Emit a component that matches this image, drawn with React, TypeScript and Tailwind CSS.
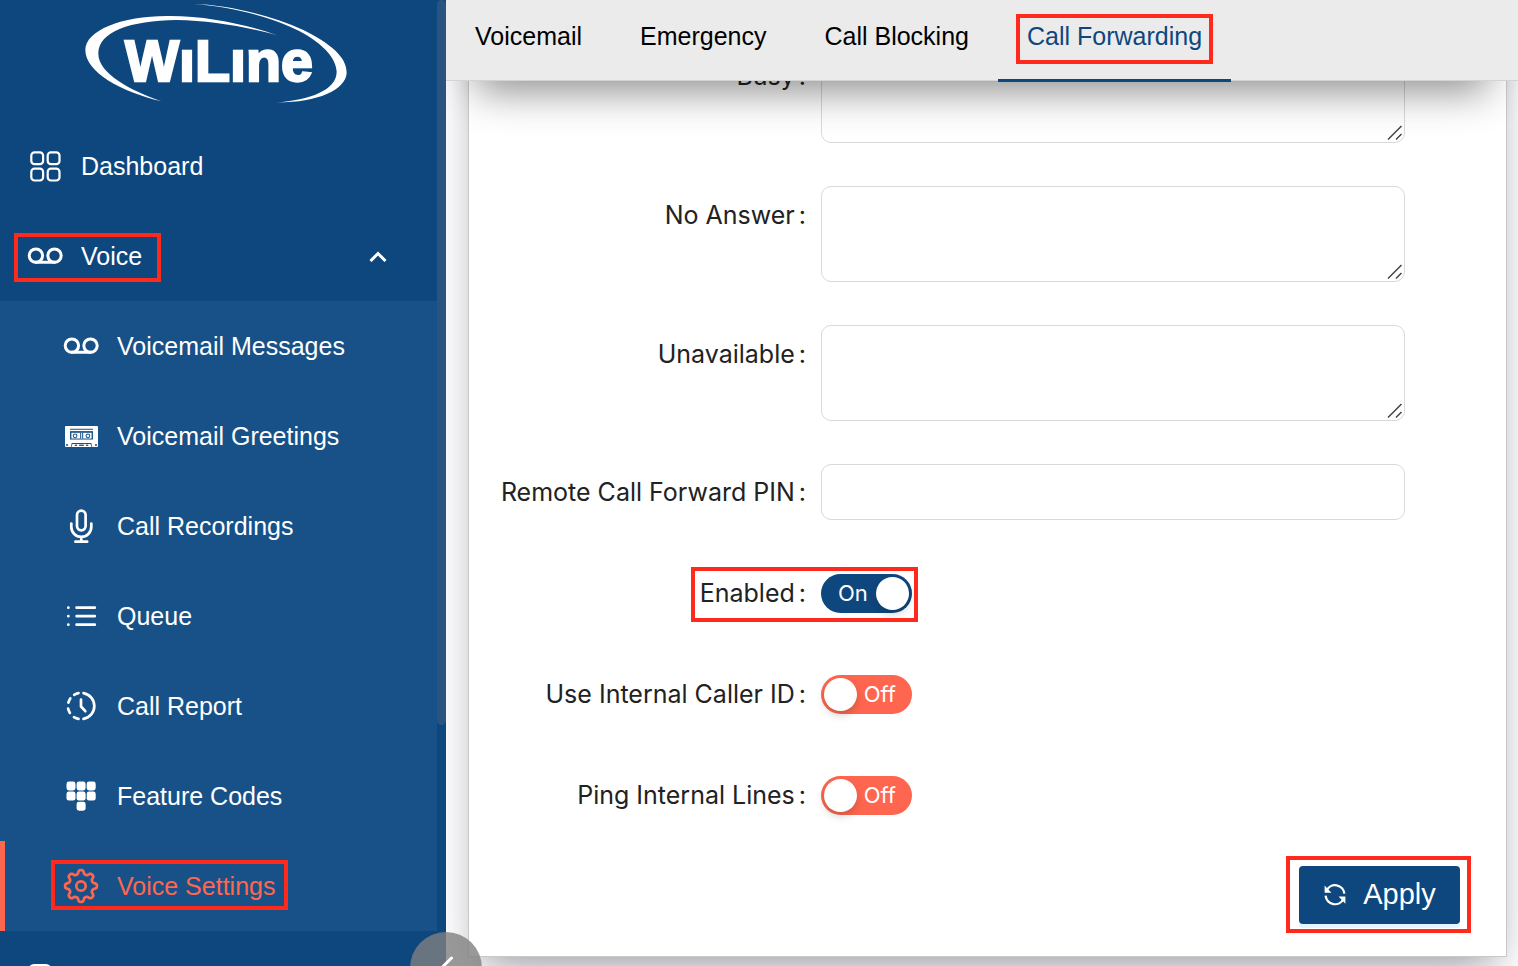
import { useState } from 'react';
import type { ReactNode } from 'react';
import clsx from 'clsx';

const Highlight = ({ className }: { className: string }) => (
  <span
    className={clsx(
      'pointer-events-none absolute border-4 border-[#ff2a1c]',
      className,
    )}
  />
);

const Logo = () => (
  <svg viewBox="0 0 900 330" className="h-[110px] w-[300px]" fill="#fff">
    <path d="M625 106C540 76 420 48 303 48C163 46 49 90 49 150C49 215 153 275 278 304C183 270 87 220 88 160C89 95 183 62 323 60C423 62 533 80 625 106Z" />
    <path d="M373 12C473 14 603 45 703 90C783 130 833 170 833 218C831 270 743 308 621 307C723 300 803 270 803 215C801 165 743 115 663 80C583 45 473 18 373 12Z" />
    <text
      x="168"
      y="242"
      fontSize="172"
      fontWeight="700"
      stroke="#fff"
      strokeWidth="7"
      fontFamily="'Liberation Sans', Arial, sans-serif"
    >
      WıLıne
    </text>
  </svg>
);

const Icon = ({ width = 2.7, children }: { width?: number; children: ReactNode }) => (
  <svg
    viewBox="0 0 36 36"
    className="size-9 shrink-0"
    fill="none"
    stroke="currentColor"
    strokeWidth={width}
    strokeLinecap="round"
    strokeLinejoin="round"
  >
    {children}
  </svg>
);

const GridIcon = () => (
  <Icon width={2.2}>
    <rect x="4.3" y="4.3" width="11.8" height="11.8" rx="3.2" />
    <rect x="20.7" y="4.3" width="11.8" height="11.8" rx="3.2" />
    <rect x="4.3" y="20.7" width="11.8" height="11.8" rx="3.2" />
    <rect x="20.7" y="20.7" width="11.8" height="11.8" rx="3.2" />
  </Icon>
);

const VoicemailIcon = () => (
  <Icon width={3}>
    <circle cx="8.9" cy="17.6" r="6.7" />
    <circle cx="27.5" cy="17.6" r="6.7" />
    <path d="M8.9 24.3H27.5" />
  </Icon>
);

const CassetteIcon = () => (
  <svg viewBox="0 0 98 62" className="h-[21px] w-[33px]">
    <rect width="98" height="62" rx="3" fill="currentColor" />
    <g fill="#185187">
      <rect x="15" y="8" width="68" height="3" />
      <rect x="15" y="15" width="68" height="25" />
      <path d="M20 50H78L81 62H17Z" />
      <circle cx="6" cy="56" r="3" />
      <circle cx="92" cy="56" r="3" />
    </g>
    <g fill="currentColor">
      <rect x="19" y="20" width="60" height="17" />
      <path d="M22 53H76L79 62H19Z" />
    </g>
    <g fill="#185187">
      <circle cx="30" cy="29" r="7" />
      <circle cx="68" cy="29" r="7" />
      <rect x="45" y="20" width="3" height="17" />
      <rect x="51" y="20" width="3" height="17" />
      <rect x="29" y="55" width="7" height="4" />
      <rect x="42" y="55" width="14" height="4" />
      <rect x="62" y="55" width="7" height="4" />
    </g>
    <g fill="currentColor">
      <circle cx="30" cy="29" r="4" />
      <circle cx="68" cy="29" r="4" />
    </g>
  </svg>
);

const MicIcon = () => (
  <Icon>
    <rect x="14" y="2.6" width="8.6" height="19.8" rx="4.3" />
    <path d="M8.3 15.5V18.9A10 10 0 0 0 28.3 18.9V15.5M18.3 29V33.7M12.4 33.7H24.2" />
  </Icon>
);

const ListIcon = () => (
  <Icon>
    <path d="M13.6 9.7H31.8M13.6 18.2H31.8M13.6 26.7H31.8" />
    <path d="M5.3 9.7H5.4M5.3 18.2H5.4M5.3 26.7H5.4" />
  </Icon>
);

const ReportIcon = () => (
  <Icon>
    <path d="M20.5 5.1A13.1 13.1 0 0 1 20.5 30.9" />
    <path d="M15.5 5.1A13.1 13.1 0 0 0 11.2 6.8" />
    <path d="M7.3 10.4A13.1 13.1 0 0 0 5.4 14.6" />
    <path d="M5.1 20.5A13.1 13.1 0 0 0 6.9 24.9" />
    <path d="M11 29.1A13.1 13.1 0 0 0 15.5 30.9" />
    <path d="M18 11.5V18.5L22.3 23.2" />
  </Icon>
);

const KEYS = [
  [3.5, 3.5],
  [13.6, 3.5],
  [23.7, 3.5],
  [3.5, 13.6],
  [13.6, 13.6],
  [23.7, 13.6],
  [13.6, 23.7],
];

const KeypadIcon = () => (
  <svg viewBox="0 0 36 36" className="size-9" fill="currentColor">
    {KEYS.map(([x, y]) => (
      <rect key={`${x}-${y}`} x={x} y={y} width="9" height="9" rx="2.4" />
    ))}
  </svg>
);

// eight rounded teeth, one on each axis and diagonal
const gearPoints = Array.from({ length: 240 }, (_, i) => {
  const t = (i / 240) * Math.PI * 2;
  const r = 14 + 1.9 * (Math.tanh(1.8 * Math.cos(8 * t)) / Math.tanh(1.8));
  return `${(18 + r * Math.cos(t)).toFixed(2)},${(18 + r * Math.sin(t)).toFixed(2)}`;
}).join(' ');

const GearIcon = () => (
  <Icon>
    <polygon points={gearPoints} />
    <circle cx="18" cy="18" r="4.7" />
  </Icon>
);

const subItems: { name: string; icon: ReactNode }[] = [
  { name: 'Voicemail Messages', icon: <VoicemailIcon /> },
  { name: 'Voicemail Greetings', icon: <CassetteIcon /> },
  { name: 'Call Recordings', icon: <MicIcon /> },
  { name: 'Queue', icon: <ListIcon /> },
  { name: 'Call Report', icon: <ReportIcon /> },
  { name: 'Feature Codes', icon: <KeypadIcon /> },
  { name: 'Voice Settings', icon: <GearIcon /> },
];

const tabs = ['Voicemail', 'Emergency', 'Call Blocking', 'Call Forwarding'];

const Sidebar = () => (
  <aside className="relative z-20 flex w-[446px] shrink-0 overflow-hidden bg-[#0e467e] text-[25px] leading-[30px] text-white">
    <nav className="min-w-0 flex-1">
      <div className="flex h-[121px] justify-center">
        <Logo />
      </div>
      <a href="#dashboard" className="flex h-[90px] items-center gap-[18px] px-[27px]">
        <GridIcon />
        Dashboard
      </a>
      <button
        type="button"
        aria-expanded="true"
        className="relative flex h-[90px] w-full items-center gap-[18px] px-[27px]"
      >
        <VoicemailIcon />
        Voice
        <svg
          viewBox="0 0 18 12"
          className="mr-[23px] ml-auto h-3 w-[18px]"
          fill="none"
          stroke="currentColor"
          strokeWidth="3"
        >
          <path d="M1.5 11L9 3.5L16.5 11" />
        </svg>
        <Highlight className="top-[22px] left-3.5 h-[49px] w-[147px]" />
      </button>
      <ul className="bg-[#185187]">
        {subItems.map(({ name, icon }) => {
          const active = name === 'Voice Settings';
          return (
            <li key={name}>
              <a
                href="#voice"
                className={clsx(
                  'relative flex h-[90px] items-center gap-[18px] border-l-5 pl-[58px]',
                  active ? 'border-[#ff664f] text-[#ff664f]' : 'border-transparent',
                )}
              >
                <span className="flex w-9 justify-center">{icon}</span>
                {name}
                {active && (
                  <Highlight className="top-[19px] left-[46px] h-[50px] w-[237px]" />
                )}
              </a>
            </li>
          );
        })}
      </ul>
      <a href="#next" aria-label="Next" className="flex h-[90px] items-center px-[27px]">
        <Icon width={3}>
          <rect x="3" y="7.5" width="20" height="24" rx="4" />
        </Icon>
      </a>
    </nav>
    <div className="w-[9px]">
      <div className="h-3/4 rounded-full bg-[#29547f]" />
    </div>
  </aside>
);

interface FieldProps {
  id: string;
  label: string;
  tall?: boolean;
  children: ReactNode;
}

const Field = ({ id, label, tall, children }: FieldProps) => (
  <div
    className={clsx(
      'flex last:mb-[43px]',
      tall ? 'mb-[43px]' : 'mb-[45px] items-center',
    )}
  >
    <label
      htmlFor={id}
      className={clsx(
        'w-[352px] shrink-0 pr-[15px] text-right whitespace-nowrap',
        tall ? 'leading-[58px]' : 'leading-[56px]',
      )}
    >
      {label}
      <span className="ml-1">:</span>
    </label>
    <div className="relative mr-[101px] flex flex-1">{children}</div>
  </div>
);

const TextBox = ({ id, label }: { id: string; label: string }) => (
  <Field id={id} label={label} tall>
    <textarea
      id={id}
      className="h-24 w-full resize-none rounded-[10px] border border-[#d9d9d9] bg-white px-5 py-2"
    />
    <svg
      viewBox="0 0 16 16"
      className="pointer-events-none absolute right-0.5 bottom-0.5 size-4"
      stroke="#444"
      strokeWidth="1.5"
    >
      <path d="M1 14.5L14.5 1M9 14.5L14.5 9" />
    </svg>
  </Field>
);

const Switch = ({ id, initial }: { id: string; initial: boolean }) => {
  const [on, setOn] = useState(initial);
  return (
    <button
      id={id}
      type="button"
      role="switch"
      aria-checked={on}
      onClick={() => setOn(!on)}
      className={clsx(
        'flex h-[39px] w-[91px] items-center justify-between rounded-full p-[3px] text-[22px] text-white',
        on ? 'bg-[#0e467e] pl-[17px]' : 'flex-row-reverse bg-[#ff664f] pr-4',
      )}
    >
      {on ? 'On' : 'Off'}
      <span className="size-[33px] rounded-full bg-white shadow-[0_4px_8px_rgba(0,35,11,0.2)]" />
    </button>
  );
};

const SyncIcon = () => (
  <svg viewBox="0 0 74 74" className="size-6" fill="none" stroke="currentColor" strokeWidth="7">
    <path d="M11 23A29 29 0 0 1 66 33M63 49A29 29 0 0 1 8 39" />
    <path d="M5 8V30H26ZM69 64V42H48Z" fill="currentColor" stroke="none" />
  </svg>
);

export default function App() {
  return (
    <div className="flex h-screen overflow-hidden bg-white font-['Liberation_Sans',Arial,sans-serif]">
      <Sidebar />
      <main className="flex min-w-0 flex-1 flex-col">
        <header className="relative z-10 -mt-20 flex shrink-0 border-b border-[#d4d4d4] bg-[#ebebeb] pt-20 text-[25px] shadow-[0_40px_40px_-30px_rgba(0,0,0,0.45)]">
          {tabs.map((tab) => {
            const active = tab === 'Call Forwarding';
            return (
              <button
                key={tab}
                type="button"
                className={clsx(
                  'relative h-20 px-[29px] pb-[7px] whitespace-nowrap',
                  active ? 'text-[#0e467e]' : 'text-black',
                )}
              >
                {tab}
                {active && (
                  <>
                    <span className="absolute inset-x-0 -bottom-0.5 h-[3px] bg-[#0e467e]" />
                    <Highlight className="inset-x-[18px] top-3.5 h-[50px]" />
                  </>
                )}
              </button>
            );
          })}
        </header>
        <div className="flex-1 overflow-hidden pr-[11px] pl-[22px]">
          <form className="-mt-24 border border-[#c8c8c8] bg-white pt-[61px] pb-8 font-['Inter',sans-serif] text-[25px] text-[#222] shadow-[0_26px_54px_-10px_rgba(50,50,93,0.25),0_16px_32px_-16px_rgba(0,0,0,0.3)]">
            <div>
              <TextBox id="busy" label="Busy" />
              <TextBox id="no-answer" label="No Answer" />
              <TextBox id="unavailable" label="Unavailable" />
              <Field id="pin" label="Remote Call Forward PIN">
                <input
                  id="pin"
                  type="text"
                  className="h-14 w-full rounded-[10px] border border-[#d9d9d9] bg-white px-5"
                />
              </Field>
              <Field id="enabled" label="Enabled">
                <Switch id="enabled" initial />
                <Highlight className="-top-[7px] -left-[130px] h-[55px] w-[227px]" />
              </Field>
              <Field id="internal-id" label="Use Internal Caller ID">
                <Switch id="internal-id" initial={false} />
              </Field>
              <Field id="ping" label="Ping Internal Lines">
                <Switch id="ping" initial={false} />
              </Field>
            </div>
            <div className="mr-[46px] flex justify-end">
              <button
                type="submit"
                className="relative flex h-[58px] w-[161px] items-center justify-center gap-4 rounded-[4px] bg-[#0e467e] font-['Liberation_Sans',Arial,sans-serif] text-[29px] text-white shadow-[0_4px_0_rgba(5,145,255,0.1)]"
              >
                <SyncIcon />
                Apply
                <Highlight className="-top-2.5 -left-[13px] h-[77px] w-[185px]" />
              </button>
            </div>
          </form>
        </div>
      </main>
      <button
        type="button"
        aria-label="Collapse menu"
        className="fixed -bottom-[38px] left-[410px] z-30 flex size-[72px] items-center justify-center rounded-full bg-[#808080]/80"
      >
        <svg
          viewBox="0 0 24 24"
          className="size-6"
          fill="none"
          stroke="#fff"
          strokeWidth="3"
          strokeLinecap="round"
        >
          <path d="M17.5 2L7.5 12L17.5 22" />
        </svg>
      </button>
    </div>
  );
}
